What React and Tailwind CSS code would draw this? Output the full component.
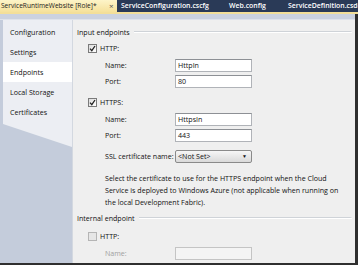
import React from "react";

const font = { fontFamily: '"Open Sans", "Noto Sans", sans-serif' };

function Check({ checked, disabled }) {
  return (
    <span
      className={`inline-flex items-center justify-center w-[9px] h-[9px] border ${
        disabled ? "border-[#b5b5b5] bg-[#e6e6e6]" : "border-[#7a7a7a] bg-gradient-to-br from-[#dcdcdc] to-[#ffffff]"
      }`}
    >
      {checked && (
        <svg width="7" height="7" viewBox="0 0 7 7">
          <path d="M1 3.6 L2.8 5.6 L6 1" stroke="#222" strokeWidth="1.3" fill="none" />
        </svg>
      )}
    </span>
  );
}

function Input({ value, disabled }) {
  return (
    <div
      className={`w-[77px] h-[13px] border ${
        disabled ? "border-[#c4c4c4] bg-[#f4f4f4]" : "border-[#b0b3b8] border-t-[#8d9095] bg-white"
      } flex items-center pl-[2px] text-[7.1px] text-[#111]`}
    >
      {value}
    </div>
  );
}

function Row({ label, children, top, disabled }) {
  return (
    <div className="flex items-center h-[13px]" style={{ marginTop: top }}>
      <span
        className={`w-[102px] shrink-0 pl-[32px] whitespace-nowrap text-[7.1px] ${
          disabled ? "text-[#a0a0a0]" : "text-[#111]"
        }`}
      >
        {label}
      </span>
      {children}
    </div>
  );
}

function Group({ title }) {
  return (
    <div className="flex items-center h-[10px] pl-[4px]">
      <span className="text-[7.1px] text-[#111] pr-[4px] whitespace-nowrap">{title}</span>
      <div className="flex-1 mr-[3px] h-[2px] border-t border-[#cfd3d8] border-b border-b-white rounded-tr-[2px]" />
    </div>
  );
}

export default function App() {
  const items = ["Configuration", "Settings", "Endpoints", "Local Storage", "Certificates"];
  return (
    <div className="w-[358px] h-[265px] overflow-hidden bg-[#2f2f2f] flex flex-col" style={font}>
      {/* tab bar */}
      <div className="h-[12px] bg-[#2a3a57] flex items-center text-[6.9px] font-semibold text-white shrink-0 whitespace-nowrap overflow-hidden">
        <div className="w-[117px] h-full shrink-0 bg-gradient-to-b from-[#fdf4c8] to-[#f5e19a] text-[#1a1a1a] flex items-center pl-[1px] leading-none">
          <span className="flex-1 font-normal text-[6.6px]">ServiceRuntimeWebsite [Role]*</span>
          <span className="w-[8px] text-[8px] font-normal text-[#555]">×</span>
        </div>
        <span className="ml-[4px] w-[108px] shrink-0 leading-none">ServiceConfiguration.cscfg</span>
        <span className="w-[59px] shrink-0 leading-none">Web.config</span>
        <span className="leading-none">ServiceDefinition.csdef</span>
      </div>
      <div className="h-[2px] bg-[#f3df98] shrink-0" />
      <div className="h-[6px] bg-[#cbd2df] border-b border-[#dfe3ea] shrink-0 mr-[3px]" />
      {/* body */}
      <div className="flex flex-1 mr-[3px] mb-[2px] min-h-0">
        {/* sidebar */}
        <div className="w-[73px] bg-[#c4ccdb] relative shrink-0 border-r border-[#d3d8e0]">
          <div
            className="absolute left-[3px] top-0 right-0 h-[130px] bg-[#eceef3]"
            style={{ clipPath: "polygon(0 0, 100% 0, 100% 127px, 0 104px)" }}
          />
          <div className="relative pt-[2px] pl-[3px] flex flex-col">
            {items.map((t) => (
              <div
                key={t}
                className={`h-[20px] flex items-center pl-[7px] text-[7.1px] text-[#111] ${
                  t === "Endpoints" ? "bg-white" : ""
                }`}
              >
                {t}
              </div>
            ))}
          </div>
        </div>
        {/* main */}
        <div className="flex-1 bg-[#efefef] flex flex-col pt-[7px]">
          <Group title="Input endpoints" />
          <div className="flex items-center h-[10px] mt-[6px] pl-[15px] gap-[3px] text-[7.1px] text-[#111]">
            <Check checked />
            <span>HTTP:</span>
          </div>
          <Row label="Name:" top="6px">
            <Input value="HttpIn" />
          </Row>
          <Row label="Port:" top="3px">
            <Input value="80" />
          </Row>
          <div className="flex items-center h-[10px] mt-[9px] pl-[15px] gap-[3px] text-[7.1px] text-[#111]">
            <Check checked />
            <span>HTTPS:</span>
          </div>
          <Row label="Name:" top="6px">
            <Input value="HttpsIn" />
          </Row>
          <Row label="Port:" top="3px">
            <Input value="443" />
          </Row>
          <Row label="SSL certificate name:" top="8px">
            <div className="w-[77px] h-[13px] border border-[#8a8a8a] rounded-[2px] bg-gradient-to-b from-[#f6f6f6] to-[#dadada] flex items-center pl-[2px] pr-[4px] text-[7.1px] text-[#111]">
              <span className="flex-1">&lt;Not Set&gt;</span>
              <span className="text-[5px]">▼</span>
            </div>
          </Row>
          <div className="mt-[9px] pl-[32px] pr-[2px] text-[7.1px] leading-[12px] text-[#111]">
            Select the certificate to use for the HTTPS endpoint when the Cloud
            <br />
            Service is deployed to Windows Azure (not applicable when running on
            <br />
            the local Development Fabric).
          </div>
          <div className="mt-[5px]">
            <Group title="Internal endpoint" />
          </div>
          <div className="flex items-center h-[10px] mt-[8px] pl-[15px] gap-[3px] text-[7.1px] text-[#111]">
            <Check disabled />
            <span>HTTP:</span>
          </div>
          <Row label="Name:" top="6px" disabled>
            <Input value="" disabled />
          </Row>
        </div>
      </div>
    </div>
  );
}
